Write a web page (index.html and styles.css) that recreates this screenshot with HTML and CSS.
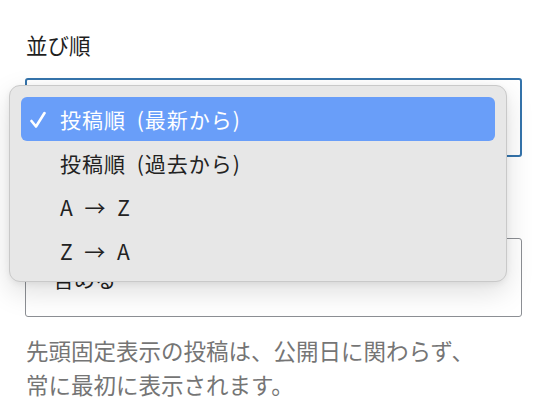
FILE: index.html
```html
<!DOCTYPE html>
<html lang="ja">
<head>
<meta charset="utf-8">
<link rel="stylesheet" href="styles.css">
</head>
<body>
<div class="panel">
  <div class="field">
    <label class="label">並び順</label>
    <div class="select focused"><span class="value">投稿順 (最新から)</span></div>
  </div>
  <div class="field">
    <div class="select"><span class="value">含める</span></div>
  </div>
  <p class="help">先頭固定表示の投稿は、公開日に関わらず、<br>常に最初に表示されます。</p>

  <ul class="menu">
    <li class="item selected">
      <svg class="check" viewBox="0 0 16 18" width="16" height="18"><polyline points="1.5,10 6,15.5 14.5,2" fill="none" stroke="#fff" stroke-width="2.6" stroke-linecap="round" stroke-linejoin="round"/></svg>
      投稿順 (最新から)
    </li>
    <li class="item">投稿順 (過去から)</li>
    <li class="item">A → Z</li>
    <li class="item">Z → A</li>
  </ul>
</div>
</body>
</html>
```
FILE: styles.css
```css
* { box-sizing: border-box; }
html, body { margin: 0; padding: 0; background: #ffffff; }
body {
  font-family: "Noto Sans CJK JP", "Noto Sans", sans-serif;
  color: #1e1e1e;
}
.panel {
  position: relative;
  padding: 30px 26px 0 25px;
  width: 548px;
  height: 418px;
}
.field { display: flex; flex-direction: column; }
.label {
  font-size: 21.5px;
  line-height: 30px;
  height: 30px;
  margin-bottom: 18px;
  padding-left: 1px;
}
.select {
  height: 79px;
  border: 1.5px solid #8c8f94;
  border-radius: 3px;
  display: flex;
  align-items: center;
  padding-left: 27px;
  font-size: 21px;
  background: #fff;
}
.select.focused {
  border: 2px solid #3473ab;
  margin-bottom: 81px;
}
.help {
  margin: 16px 0 0 1px;
  font-size: 22.5px;
  line-height: 34px;
  color: #757575;
}
.menu {
  position: absolute;
  left: 9px;
  top: 85px;
  width: 498px;
  height: 197px;
  margin: 0;
  padding: 11px 11px 10px 11px;
  list-style: none;
  background: #e7e7e7;
  border: 1px solid #c9c9c9;
  border-radius: 11px;
  box-shadow: 0 10px 28px rgba(0,0,0,0.13), 0 2px 6px rgba(0,0,0,0.06);
}
.item {
  position: relative;
  height: 44px;
  display: flex;
  align-items: center;
  padding-left: 39px;
  font-size: 21px;
  letter-spacing: 1px;
  word-spacing: 5px;
  color: #222;
  border-radius: 6px;
}
.item.selected {
  background: #699ef9;
  color: #fff;
}
.check {
  position: absolute;
  left: 9px;
  top: 14px;
}
```
